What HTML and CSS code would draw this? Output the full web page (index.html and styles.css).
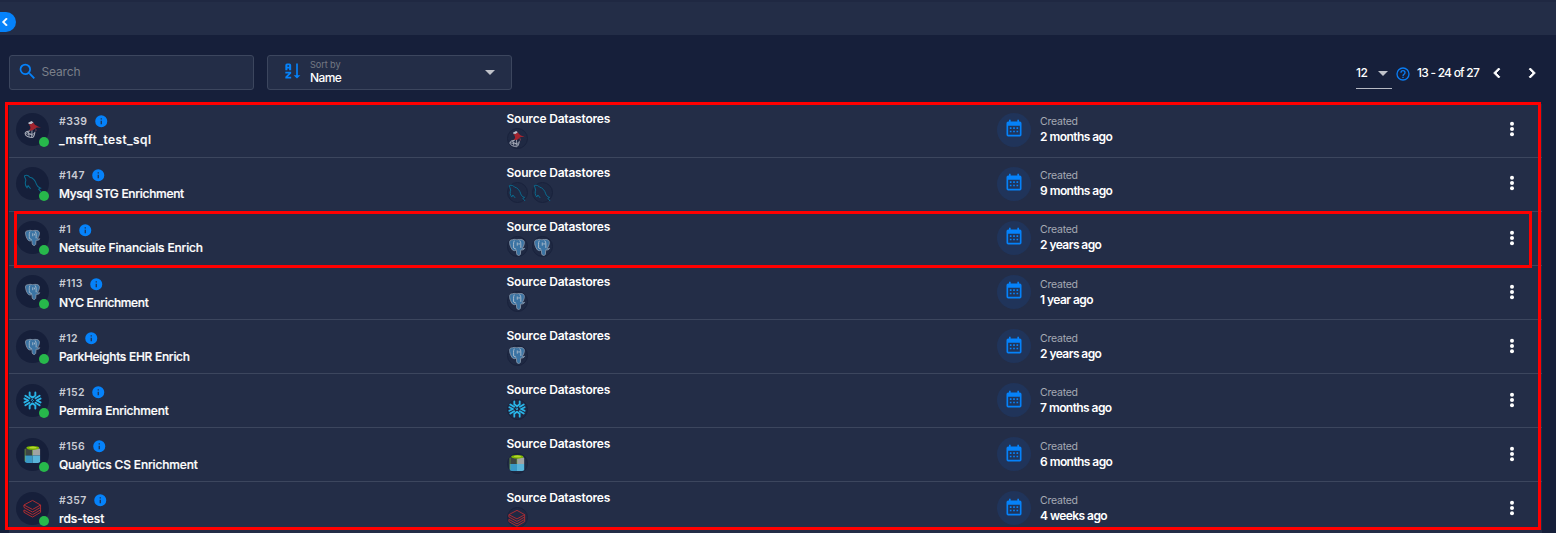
FILE: index.html
```html
<!DOCTYPE html>
<html lang="en">
<head>
<meta charset="utf-8">
<title>Enrichment Datastores</title>
<link rel="stylesheet" href="styles.css">
</head>
<body>
<svg class="defs" aria-hidden="true">
  <symbol id="chev-left" viewBox="0 0 24 24"><path d="M15.41 16.58 10.83 12l4.58-4.59L14 6l-6 6 6 6z"/></symbol>
  <symbol id="chev-right" viewBox="0 0 24 24"><path d="M8.59 16.58 13.17 12 8.59 7.41 10 6l6 6-6 6z"/></symbol>
  <symbol id="search" viewBox="0 0 24 24"><path d="M9.5 3A6.5 6.5 0 0 1 16 9.5c0 1.61-.59 3.09-1.56 4.23l.27.27h.79l5 5-1.5 1.5-5-5v-.79l-.27-.27A6.52 6.52 0 0 1 9.5 16a6.5 6.5 0 0 1 0-13m0 2C7 5 5 7 5 9.5S7 14 9.5 14 14 12 14 9.5 12 5 9.5 5"/></symbol>
  <symbol id="sort" viewBox="0 0 24 24"><path d="M19 17h3l-4 4-4-4h3V3h2zM9 13H4v2h4l-4 4v2h7v-2H7l4-4v-2zM9 3H6a2 2 0 0 0-2 2v6h2.500V9h2v2H11V5a2 2 0 0 0-2-2m-.5 4h-2V5h2z"/></symbol>
  <symbol id="help" viewBox="0 0 24 24"><path d="M11 18h2v-2h-2zm1-16a10 10 0 1 0 0 20 10 10 0 0 0 0-20m0 18a8 8 0 1 1 0-16 8 8 0 0 1 0 16m0-14a4 4 0 0 0-4 4h2a2 2 0 1 1 4 0c0 2-3 1.750-3 5h2c0-2.250 3-2.500 3-5a4 4 0 0 0-4-4"/></symbol>
  <symbol id="info" viewBox="0 0 24 24"><path d="M13 9h-2V7h2m0 10h-2v-6h2m-1-9a10 10 0 1 0 0 20 10 10 0 0 0 0-20"/></symbol>
  <symbol id="calendar" viewBox="0 0 24 24"><path d="M19 19H5V8h14m0-5h-1V1h-2v2H8V1H6v2H5a2 2 0 0 0-2 2v14a2 2 0 0 0 2 2h14a2 2 0 0 0 2-2V5a2 2 0 0 0-2-2M7 10h2v2H7zm4 0h2v2h-2zm4 0h2v2h-2zm-8 4h2v2H7zm4 0h2v2h-2zm4 0h2v2h-2z"/></symbol>
  <symbol id="dots" viewBox="0 0 24 24"><circle cx="12" cy="5.700" r="2.400"/><circle cx="12" cy="12" r="2.400"/><circle cx="12" cy="18.300" r="2.400"/></symbol>
  <symbol id="mssql" viewBox="0 0 20 20">
    <path d="M5.500 3 9 1l2 1.500-2 2-3-.2z" fill="#b9bcc8"/>
    <path d="M6 4.500c2 .5 4-1 5-2 1 2.500 3 3.500 8 5.500-3.500-.5-5.500-.3-7 1.500-1.500 1.800-3.500 2-6 1.500 2.500-1.500 2.500-3.500 0-6.500z" fill="#a3242f"/>
    <path d="M13 9c1 1 .8 2 .2 3" stroke="#c0606a" stroke-width=".6" fill="none"/>
    <path d="M7.500 11.500c-3 0-5.500 1.200-5.300 3 .2 2.300 4 4 7.500 4 1.500-.5 2.500-3 2.800-6" fill="none" stroke="#a9aebb" stroke-width="1.100"/>
    <path d="M2.500 14c3 1.500 6 1.500 9.500.3M5.500 12l1 5.500M9.500 11l-.5 7M4 12.500l7 4" fill="none" stroke="#a9aebb" stroke-width=".9"/>
  </symbol>
  <symbol id="mysql" viewBox="0 0 20 20"><path d="M1.500 1.800c2.500-1 4.500 0 5.700 1.600 3.500.7 6 4 7 7.600.6 2 1.800 3.200 4.300 3.900l-2 1 2.500 3M1.500 1.800c0 2 1.500 3 1.500 5-1 2.500-.8 5.200 1.200 7.700l1.200-2.300L8 15.500" fill="none" stroke="#0a6a8e" stroke-width="1.100"/></symbol>
  <symbol id="postgres" viewBox="0 0 20 20">
    <path d="M5 2c3-1 4 0 5 0s3.500-1 6.500.2c3 1.500 1.500 6-.7 9.300 1.200.2 2 .2 2.700 0-.8 1.700-2.500 2-4.300 1.700l-.5 5c-.7 1.800-3.500 1.500-4-.5l-.4-4.200c-1.500.8-3 .8-4.300-.2C3 11 .5 4.500 2.500 2.700 3.200 2.200 4 2 5 2z" fill="#3a73a3" stroke="#8795a8" stroke-width="1"/>
    <path d="M7 3C5.500 6 6.500 8 6.200 11l2.800 1.500M13 2.800c2 2.500 1 5 1.300 8.200M10.300 5v3.500M12.300 5.500v2" fill="none" stroke="#b4c0cd" stroke-width="1"/>
  </symbol>
  <symbol id="snowflake" viewBox="0 0 20 20">
    <g fill="none" stroke="#29b5e8" stroke-width="2" stroke-linecap="round" stroke-linejoin="round">
      <path d="M7 1.500v3.300L10 7l3-2.200V1.500M7 18.500v-3.300L10 13l3 2.200v3.300"/>
      <path d="M1.500 8 5.500 10 1.500 12M18.500 8l-4 2 4 2"/>
      <path d="M2.500 5 6.800 7.600M17.500 5l-4.300 2.600M2.500 15l4.300-2.600M17.500 15l-4.300-2.600"/>
      <path d="M10 9 11 10 10 11 9 10z" stroke-width="1"/>
    </g>
  </symbol>
  <symbol id="synapse" viewBox="0 0 20 20">
    <path d="M3 3.500 10 5v6H2V4.500z" fill="#3d4543"/><path d="M10 5l7-1.500 1 1v6.500h-8z" fill="#a0a3a3"/>
    <path d="M2 11h8v8H4l-2-1z" fill="#3999c6"/><path d="M10 11h8v7l-2 1h-6z" fill="#59b4d9"/>
    <path d="M10 5v6M2.200 4v13" stroke="#7fba42" stroke-width=".6"/>
    <ellipse cx="10.300" cy="3" rx="6.800" ry="2" fill="#7fba00"/><ellipse cx="10.500" cy="2.700" rx="4" ry=".9" fill="#b8d432"/>
  </symbol>
  <symbol id="databricks" viewBox="0 0 20 20"><path d="M1 6.300 10 1.500l8.500 4.800L10 11 1 6.300v2.500l9 5 8.500-5v2.700l-8.500 5-9-5v2.500l9 5 8.500-5v-2.500M18.500 8.800V6.300" fill="none" stroke="#b52d32" stroke-width="1"/></symbol>
</svg>

<header class="topbar"></header>
<button class="drawer-toggle" aria-label="Collapse"><svg><use href="#chev-left"/></svg></button>
<main class="page">
  <div class="toolbar">
    <label class="field">
      <svg class="search-icon"><use href="#search"/></svg><span class="placeholder">Search</span>
    </label>
    <div class="field sort">
      <svg class="sort-icon"><use href="#sort"/></svg>
      <div class="sort-text"><span class="sort-label">Sort by</span><span class="sort-value">Name</span></div>
      <i class="caret"></i>
    </div>
    <div class="pager">
      <div class="page-size"><span>12</span><i class="caret"></i></div>
      <svg class="help-icon"><use href="#help"/></svg>
      <span class="range">13 - 24 of 27</span>
      <svg class="nav"><use href="#chev-left"/></svg>
      <svg class="nav next"><use href="#chev-right"/></svg>
    </div>
  </div>
  <section class="list" id="list"></section>
</main>
<div class="outline outline-list"></div>
<div class="outline outline-row"></div>
<script src="app.js"></script>
</body>
</html>
```
FILE: styles.css
```css
* { box-sizing: border-box; }
body {
  margin: 0;
  height: 533px;
  overflow: hidden;
  position: relative;
  background: #161f3a;
  color: #fff;
  font-family: Inter, "Liberation Sans", sans-serif;
  font-size: 12px;
}
svg { display: block; fill: currentColor; flex: none; }
.defs { position: absolute; width: 0; height: 0; }
.topbar { height: 35px; background: #232d47; border-top: 2px solid #1f2842; }
.drawer-toggle {
  position: absolute; left: 0; top: 12px; width: 16px; height: 20px;
  padding: 0; border: 0; border-radius: 0 10px 10px 0;
  background: #0582fa; color: #fff; display: flex; align-items: center;
}
.drawer-toggle svg { width: 16px; height: 16px; margin: -1px 0 0 -3px; stroke: #fff; stroke-width: 1; }
.page { padding: 20px 14px 0 9px; }
.toolbar { display: flex; gap: 13px; height: 35px; }
.field {
  width: 245px; height: 35px; display: flex; align-items: center;
  background: #232d47; border: 1px solid #3c465e; border-radius: 3px;
}
.search-icon { width: 21px; height: 21px; margin: -3px 4px 0 6.500px; color: #0582fa; }
.placeholder { color: #7b808a; font-size: 12px; letter-spacing: -.15px; padding-bottom: 2.500px; }
.sort-icon { width: 20px; height: 20px; margin: -3px 8px 0 14px; color: #0582fa; }
.sort-text { display: flex; flex-direction: column; line-height: 13px; padding-bottom: 2px; }
.sort-label { font-size: 9.200px; color: #747984; line-height: 12px; letter-spacing: -.1px; }
.sort-value { font-size: 12px; font-weight: 500; letter-spacing: -.6px; }
.caret { border: 5px solid transparent; border-top-color: #bfc2ca; border-bottom: 0; }
.sort .caret { margin-left: auto; margin-right: 16px; }
.pager { margin-left: auto; display: flex; align-items: center; font-weight: 500; }
.page-size {
  width: 36px; height: 32px; display: flex; align-items: center;
  justify-content: space-between; border-bottom: 1px solid #b7bac4; padding-right: 4px;
}
.page-size .caret { margin-top: 2px; }
.page-size span { letter-spacing: -.5px; padding-top: 1px; }
.help-icon { width: 16px; height: 16px; margin: 2px 6px 0 3px; color: #0a7cf2; }
.range { width: 63px; white-space: nowrap; letter-spacing: -.8px; word-spacing: .1px; }
.nav { width: 20px; height: 20px; margin-left: 7px; stroke: #fff; stroke-width: 1; }
.nav.next { margin-left: 15px; margin-right: 0; }
.list { margin-top: 13.550px; width: 1533px; background: #232d47; }
.row {
  height: 54.140px; border-bottom: 1px solid #3c465e; display: grid;
  grid-template-columns: 490px 490px 1fr 46px; padding-left: 7px;
}
.store { display: flex; padding-top: 9.500px; }
.avatar {
  width: 33px; height: 33px; border-radius: 50%; background: #161f3a;
  position: relative; display: grid; place-items: center; margin-right: 10px;
}
.avatar > svg { width: 19px; height: 19px; }
.avatar > .postgres { width: 17px; height: 17px; }
.status {
  position: absolute; right: 0; bottom: -1px; width: 10px; height: 10px;
  border-radius: 50%; background: #27b84b;
}
.id {
  display: flex; align-items: center; height: 16px; gap: 6.500px; padding-top: 1px;
  color: #c9ccd4; font-size: 10.500px; font-weight: 600; letter-spacing: .4px;
}
.id svg { width: 14.500px; height: 14.500px; color: #0582fa; }
.name { line-height: 18px; font-weight: 500; white-space: nowrap; padding-top: 2.100px; -webkit-text-stroke: .2px #fff; }
.sources { padding: 7.650px 0 0 .5px; }
.sources-title { line-height: 16px; font-weight: 600; letter-spacing: -.2px; }
.chips { display: flex; gap: 4px; margin-top: 1px; }
.chip {
  width: 21px; height: 21px; border: 1px solid #19223c; border-radius: 50%;
  background: #1f2943; display: grid; place-items: center;
}
.chip svg { width: 18px; height: 18px; }
.created { display: flex; padding: 9px 0 0 .6px; }
.cal { width: 34px; height: 34px; border-radius: 50%; background: #20345a; color: #0582fa; display: grid; place-items: center; margin-right: 9.500px; }
.cal svg { width: 20px; height: 20px; margin-top: -1px; }
.when-label { display: block; font-size: 10.500px; line-height: 14px; padding-top: 2.650px; color: #a5a9b4; letter-spacing: -.25px; }
.when { display: block; line-height: 16px; font-weight: 600; white-space: nowrap; letter-spacing: -.570px; }
.menu { width: 20px; height: 20px; margin: 15.800px 0 0 6px; }
.outline { position: absolute; border: 3px solid #f00; }
.outline-list { left: 5px; top: 102px; width: 1536px; height: 428px; }
.outline-row { left: 14px; top: 211px; width: 1518px; height: 57px; }
```
FILE: app.js
```js
// id, name, connector, source count, age, letter spacing of the name in px
const stores = [
  ["#339", "_msfft_test_sql", "mssql", 1, "2 months ago", 0.5],
  ["#147", "Mysql STG Enrichment", "mysql", 2, "9 months ago", -0.3],
  ["#1", "Netsuite Financials Enrich", "postgres", 2, "2 years ago", -0.17],
  ["#113", "NYC Enrichment", "postgres", 1, "1 year ago", -0.36],
  ["#12", "ParkHeights EHR Enrich", "postgres", 1, "2 years ago", -0.28],
  ["#152", "Permira Enrichment", "snowflake", 1, "7 months ago", -0.2],
  ["#156", "Qualytics CS Enrichment", "synapse", 1, "6 months ago", -0.16],
  ["#357", "rds-test", "databricks", 1, "4 weeks ago", 0]
];
const icon = (name, cls = name) => `<svg class="${cls}"><use href="#${name}"/></svg>`;
document.getElementById("list").innerHTML = stores.map(([id, name, kind, count, when, track]) => `
  <article class="row">
    <div class="store">
      <div class="avatar">${icon(kind)}<i class="status"></i></div>
      <div><div class="id"><span>${id}</span>${icon("info")}</div><div class="name" style="letter-spacing:${track}px">${name}</div></div>
    </div>
    <div class="sources">
      <div class="sources-title"><span>Source Datastores</span></div>
      <div class="chips">${`<span class="chip">${icon(kind)}</span>`.repeat(count)}</div>
    </div>
    <div class="created">
      <span class="cal">${icon("calendar")}</span>
      <div><span class="when-label">Created</span><span class="when">${when}</span></div>
    </div>
    ${icon("dots", "menu")}
  </article>`).join("");
```
